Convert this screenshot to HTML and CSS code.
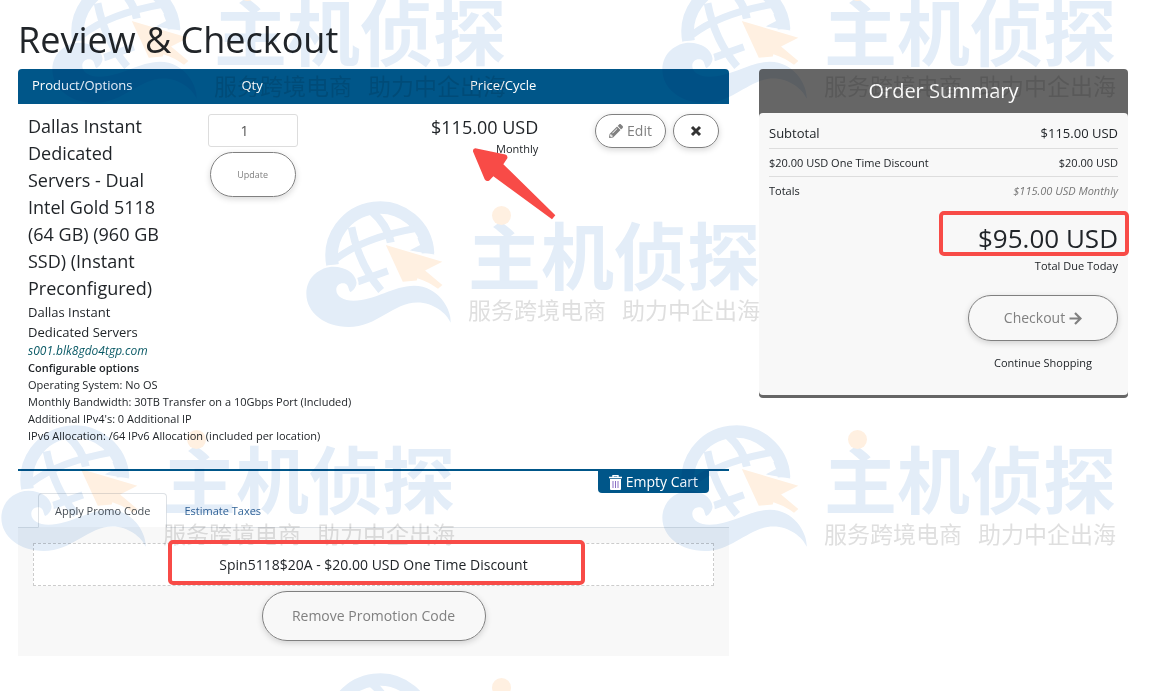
FILE: index.html
```html
<!DOCTYPE html>
<html lang="en">
<head>
<meta charset="utf-8">
<title>Review &amp; Checkout</title>
<link rel="stylesheet" href="styles.css">
</head>
<body>
<svg class="defs" aria-hidden="true">
  <symbol id="globe" viewBox="18 33 440 382">
    <g fill="none" stroke="#e3edf8">
      <path d="M97 226A145 145 0 1 1 384 190" stroke-width="38"/>
      <path d="M154 112Q176 225 243 302" stroke-width="23"/>
      <path d="M216 65Q262 105 272 158" stroke-width="24"/>
      <path d="M108 207Q190 143 350 115" stroke-width="21"/>
      <path d="M172 276L263 243" stroke-width="22"/>
    </g>
    <path d="M352 145L360 165L328 182L403 194L390 140Z" fill="#e3edf8"/>
    <path d="M257 165L427 216L375 242L427 286L414 297Q385 275 352 265L350 272L308 276Z" fill="#fff0e1" stroke="#fff" stroke-width="10" paint-order="stroke"/>
    <path d="M100 231C60 231 18 262 18 312C18 370 75 412 145 412C230 412 280 338 352 338C400 338 440 370 452 399C455 360 415 288 342 288C280 288 225 333 160 333C130 333 108 320 108 300C108 285 122 277 136 282C146 287 144 300 150 307C160 302 169 290 169 278C165 250 135 231 100 231Z" fill="#e3edf8" stroke="#fff" stroke-width="12" paint-order="stroke"/>
  </symbol>
</svg>

<main class="page">
  <h1 class="title">Review &amp; Checkout</h1>
  <div class="columns">
    <section class="cart">
      <table class="items">
        <thead>
          <tr>
            <th class="col-product">Product/Options</th>
            <th class="col-qty">Qty</th>
            <th class="col-price">Price/Cycle</th>
            <th class="col-actions" aria-label="Actions"></th>
          </tr>
        </thead>
        <tbody>
          <tr>
            <td class="product">
              <div class="name">Dallas Instant Dedicated Servers - Dual Intel Gold 5118 (64 GB) (960 GB SSD) (Instant Preconfigured)</div>
              <div class="group">Dallas Instant Dedicated Servers</div>
              <div class="domain">s001.blk8gdo4tgp.com</div>
              <div class="config">
                <strong>Configurable options</strong><br>
                Operating System: No OS<br>
                Monthly Bandwidth: 30TB Transfer on a 10Gbps Port (Included)<br>
                Additional IPv4's: 0 Additional IP<br>
                IPv6 Allocation: /64 IPv6 Allocation (included per location)
              </div>
            </td>
            <td class="qty">
              <input class="qty-input" type="text" value="1" aria-label="Quantity">
              <button class="pill pill-update" type="button">Update</button>
            </td>
            <td class="price">
              <div class="amount">$115.00 USD</div>
              <div class="cycle">Monthly</div>
              <svg class="mark-arrow" viewBox="264 441 252 218" aria-hidden="true"><path d="M274 444L364 463Q372 466 370 474L358 492L514 645L504 657L328 528L316 541Q308 546 302 537L267 454Q266 445 274 444Z" fill="#f84b47"/></svg>
            </td>
            <td class="actions">
              <div class="action-row">
                <button class="pill pill-edit" type="button"><svg class="icon" viewBox="0 0 512 512" aria-hidden="true"><path fill="currentColor" d="M497.9 142.1l-46.1 46.1c-4.7 4.7-12.3 4.7-17 0l-111-111c-4.7-4.7-4.7-12.3 0-17l46.1-46.1c18.7-18.7 49.1-18.7 67.9 0l60.1 60.1c18.8 18.7 18.8 49.1 0 67.9zM284.2 99.8L21.6 362.4.4 483.9c-2.9 16.4 11.4 30.6 27.8 27.8l121.5-21.3 262.6-262.6c4.7-4.7 4.7-12.3 0-17l-111-111c-4.8-4.7-12.4-4.7-17.1 0zM124.1 339.9c-5.5-5.5-5.5-14.3 0-19.8l154-154c5.5-5.5 14.3-5.5 19.8 0s5.5 14.3 0 19.8l-154 154c-5.5 5.5-14.3 5.5-19.8 0zM88 424h48v36.3l-64.5 11.3-31.1-31.1L51.7 376H88v48z"/></svg>Edit</button>
                <button class="pill pill-remove" type="button" aria-label="Remove"><svg class="icon-x" viewBox="0 0 12 12" aria-hidden="true"><path d="M2 2L10 10M10 2L2 10" stroke="currentColor" stroke-width="3"/></svg></button>
              </div>
            </td>
          </tr>
        </tbody>
      </table>

      <div class="empty-row">
        <button class="empty" type="button"><svg class="icon-trash" viewBox="0 0 13 15" aria-hidden="true"><path d="M4 2V0.5H9V2M0 2.5H13" fill="none" stroke="#fff" stroke-width="1.4"/><path d="M1 4H12V14Q12 15 11 15H2Q1 15 1 14Z" fill="#fff"/><path d="M4 6V13M6.5 6V13M9 6V13" stroke="#8a6fc4" stroke-width="1"/></svg>Empty Cart</button>
      </div>

      <div class="tabs" role="tablist">
        <button class="tab tab-active" type="button" role="tab" aria-selected="true">Apply Promo Code</button>
        <button class="tab" type="button" role="tab" aria-selected="false">Estimate Taxes</button>
      </div>
      <div class="pane">
        <div class="promo">Spin5118$20A - $20.00 USD One Time Discount<span class="mark-box mark-promo"></span></div>
        <button class="pill pill-promo" type="button">Remove Promotion Code</button>
      </div>
    </section>

    <aside class="summary">
      <h2 class="summary-title">Order Summary</h2>
      <div class="summary-body">
        <div class="line line-subtotal"><span>Subtotal</span><span>$115.00 USD</span></div>
        <div class="line"><span>$20.00 USD One Time Discount</span><span>$20.00 USD</span></div>
        <div class="line line-totals"><span>Totals</span><em class="recurring">$115.00 USD Monthly</em></div>
        <div class="due">
          <div class="due-amount">$95.00 USD</div>
          <div class="due-label">Total Due Today</div>
          <span class="mark-box mark-due"></span>
        </div>
        <div class="checkout">
          <button class="pill pill-checkout" type="button">Checkout <svg class="icon-arrow" viewBox="0 0 13 13" aria-hidden="true"><path d="M0.5 6.5H11M6 1L11.5 6.5L6 12" fill="none" stroke="currentColor" stroke-width="2.2"/></svg></button>
          <a class="continue" href="#">Continue Shopping</a>
        </div>
      </div>
    </aside>
  </div>
</main>

<div class="watermarks" aria-hidden="true">
  <div class="wm wm-1"><svg class="wm-globe"><use href="#globe"/></svg><div class="wm-text"><span class="wm-name">主机侦探</span><span class="wm-sub">服务跨境电商&ensp;&thinsp;助力中企出海</span></div></div>
  <div class="wm wm-2"><svg class="wm-globe"><use href="#globe"/></svg><div class="wm-text"><span class="wm-name">主机侦探</span><span class="wm-sub">服务跨境电商&ensp;&thinsp;助力中企出海</span></div></div>
  <div class="wm wm-3"><svg class="wm-globe"><use href="#globe"/></svg><div class="wm-text"><span class="wm-name">主机侦探</span><span class="wm-sub">服务跨境电商&ensp;&thinsp;助力中企出海</span></div></div>
  <div class="wm wm-4"><svg class="wm-globe"><use href="#globe"/></svg><div class="wm-text"><span class="wm-name">主机侦探</span><span class="wm-sub">服务跨境电商&ensp;&thinsp;助力中企出海</span></div></div>
  <div class="wm wm-5"><svg class="wm-globe"><use href="#globe"/></svg><div class="wm-text"><span class="wm-name">主机侦探</span><span class="wm-sub">服务跨境电商&ensp;&thinsp;助力中企出海</span></div></div>
  <div class="wm wm-6"><svg class="wm-globe"><use href="#globe"/></svg><div class="wm-text"></div></div>
</div>
</body>
</html>
```
FILE: styles.css
```css
* { box-sizing: border-box; }

body {
  position: relative;
  margin: 0;
  min-height: 100vh;
  background: #fff;
  color: #212529;
  font-family: "Open Sans", "Noto Sans", sans-serif;
  font-size: 13px;
  line-height: 20px;
}

button, input { font: inherit; }

.defs { position: absolute; width: 0; height: 0; }

.page { padding: 16px 23px 35px 18px; }

.title { margin: 0 0 5px; font-size: 36px; font-weight: 400; line-height: 48px; }

.columns {
  display: grid;
  grid-template-columns: minmax(0, 711fr) minmax(0, 369fr);
  gap: 30px;
  align-items: start;
}

/* Cart table */
.items {
  width: 100%;
  table-layout: fixed;
  border-collapse: separate;
  border-spacing: 0;
  border-bottom: 2px solid #005689;
}
.items th {
  height: 35px;
  padding: 0 15px 4px 14px;
  background: #005689;
  color: #fff;
  font-weight: 400;
  text-align: left;
}
.items th:first-child { border-top-left-radius: 4px; }
.items th:last-child { border-top-right-radius: 4px; }
.items .col-product { width: 24%; }
.items .col-qty { width: 18%; text-align: center; }
.items .col-price { width: 33%; text-align: right; }
.items .col-actions { width: 25%; }
.items td { padding: 10px 10px 25px; vertical-align: top; }
.items .product { padding-top: 9px; }

.name { font-size: 18px; line-height: 27px; }
.group { width: 130px; }
.domain { color: #0b5a66; font-size: 12px; font-style: italic; line-height: 17px; white-space: nowrap; }
.config { font-size: 11px; line-height: 17px; white-space: nowrap; }
.config strong { font-weight: 600; }

.items .qty { text-align: center; }
.qty-input {
  display: block;
  width: 90px;
  height: 33px;
  margin: 0 auto 5px;
  padding: 0 16px 0 0;
  border: 1px solid #ddd;
  border-radius: 3px;
  background: #fff;
  color: #555;
  font-size: 14px;
  text-align: center;
}

.pill {
  display: inline-flex;
  align-items: center;
  justify-content: center;
  padding: 0;
  border: 1px solid #808080;
  border-radius: 25px;
  background: transparent;
  box-shadow: 0 2px 6px rgba(0, 0, 0, 0.16);
  color: #808080;
  font-size: 14px;
}
.pill-update { width: 86px; height: 45px; font-size: 9px; }
.pill-edit { width: 71px; height: 34px; gap: 4px; }
.pill-remove { width: 46px; height: 34px; color: #333; }
.pill-promo { width: 224px; height: 50px; }
.pill-checkout { width: 150px; height: 46px; gap: 4px; }

.icon { width: 14px; height: 14px; }
.icon-x { width: 12px; height: 12px; }
.icon-arrow { width: 13px; height: 13px; }
.icon-trash { width: 13px; height: 15px; }

.items .price { position: relative; padding-right: 13px; text-align: right; }
.amount { font-size: 18px; line-height: 27px; }
.cycle { font-size: 11px; line-height: 15px; }
.mark-arrow { position: absolute; top: 43px; right: -5px; width: 84px; height: 73px; z-index: 3; }

.action-row { display: flex; justify-content: flex-end; gap: 7px; }

.empty-row { display: flex; justify-content: flex-end; padding-right: 20px; }
.empty {
  display: flex;
  align-items: center;
  gap: 4px;
  height: 22px;
  padding: 0 11px;
  border: 0;
  border-radius: 0 0 4px 4px;
  background: #005689;
  color: #fff;
  font-size: 14px;
}

/* Promo tabs */
.tabs { display: flex; padding: 0 20px; border-bottom: 1px solid #dee2e6; }
.tab {
  height: 35px;
  margin-bottom: -1px;
  padding: 0 16px;
  border: 1px solid transparent;
  border-radius: 4px 4px 0 0;
  background: transparent;
  color: #336699;
  font-size: 11px;
}
.tab-active { border-color: #dee2e6; border-bottom-color: #f8f8f8; background: #fff; color: #495057; }

.pane { padding: 15px; background: #f8f8f8; text-align: center; }
.promo {
  position: relative;
  margin-bottom: 5px;
  padding: 10px;
  border: 1px dashed #ccc;
  background: #fff;
  font-size: 14px;
  line-height: 21px;
}

.mark-box { position: absolute; border: 4px solid #f84b47; border-radius: 5px; z-index: 3; }
.mark-promo { top: -4px; bottom: 0; left: 134px; width: 417px; }
.mark-due { top: 1px; right: -11px; width: 190px; height: 45px; }

/* Order summary */
.summary { border-bottom: 3px solid #666; border-radius: 4px; background: #666; }
.summary-title {
  margin: 0;
  color: #fff;
  font-size: 20px;
  font-weight: 400;
  line-height: 44px;
  text-align: center;
}
.summary-body {
  padding: 7px 10px 22px;
  border-radius: 4px;
  background: #f8f8f8;
}
.line {
  display: flex;
  justify-content: space-between;
  padding: 4px 0 3px;
  border-bottom: 1px solid #ddd;
  font-size: 11px;
}
.line-subtotal { padding: 3px 0 5px; font-size: 13px; }
.line-totals { border-bottom: 0; }
.recurring { color: #777; }
.due { position: relative; margin-top: 6px; padding-top: 10px; text-align: right; }
.due-amount { font-size: 26px; line-height: 36px; }
.due-label { font-size: 11px; line-height: 20px; }
.checkout {
  display: flex;
  width: 150px;
  margin: 19px 0 0 auto;
  flex-direction: column;
  align-items: center;
  gap: 12px;
}
.continue { color: #212529; font-size: 11px; line-height: 20px; text-decoration: none; white-space: nowrap; }

/* Tiled brand watermark laid over the whole page */
.watermarks {
  position: absolute;
  inset: 0;
  overflow: hidden;
  mix-blend-mode: multiply;
  pointer-events: none;
}
.wm { position: absolute; display: flex; gap: 15px; width: 453px; }
.wm-globe { flex: none; width: 147px; height: 127px; }
.wm-text {
  position: relative;
  padding-top: 15px;
  font-family: "Noto Sans CJK SC", sans-serif;
  white-space: nowrap;
}
.wm-text::before {
  position: absolute;
  top: 5px;
  left: 24px;
  width: 19px;
  height: 19px;
  border-radius: 50%;
  background: #fff0e1;
  content: "";
}
.wm-name { display: block; color: #e3edf8; font-size: 73px; font-weight: 700; line-height: 73px; }
.wm-sub { display: block; margin-top: 8px; color: #dfdfdf; font-size: 23px; line-height: 24px; }
.wm-1 { top: -23px; left: 52px; }
.wm-2 { top: -23px; left: 662px; }
.wm-3 { top: 201px; left: 306px; }
.wm-4 { top: 425px; left: 1px; }
.wm-5 { top: 425px; left: 662px; }
.wm-6 { top: 673px; left: 306px; }
```
